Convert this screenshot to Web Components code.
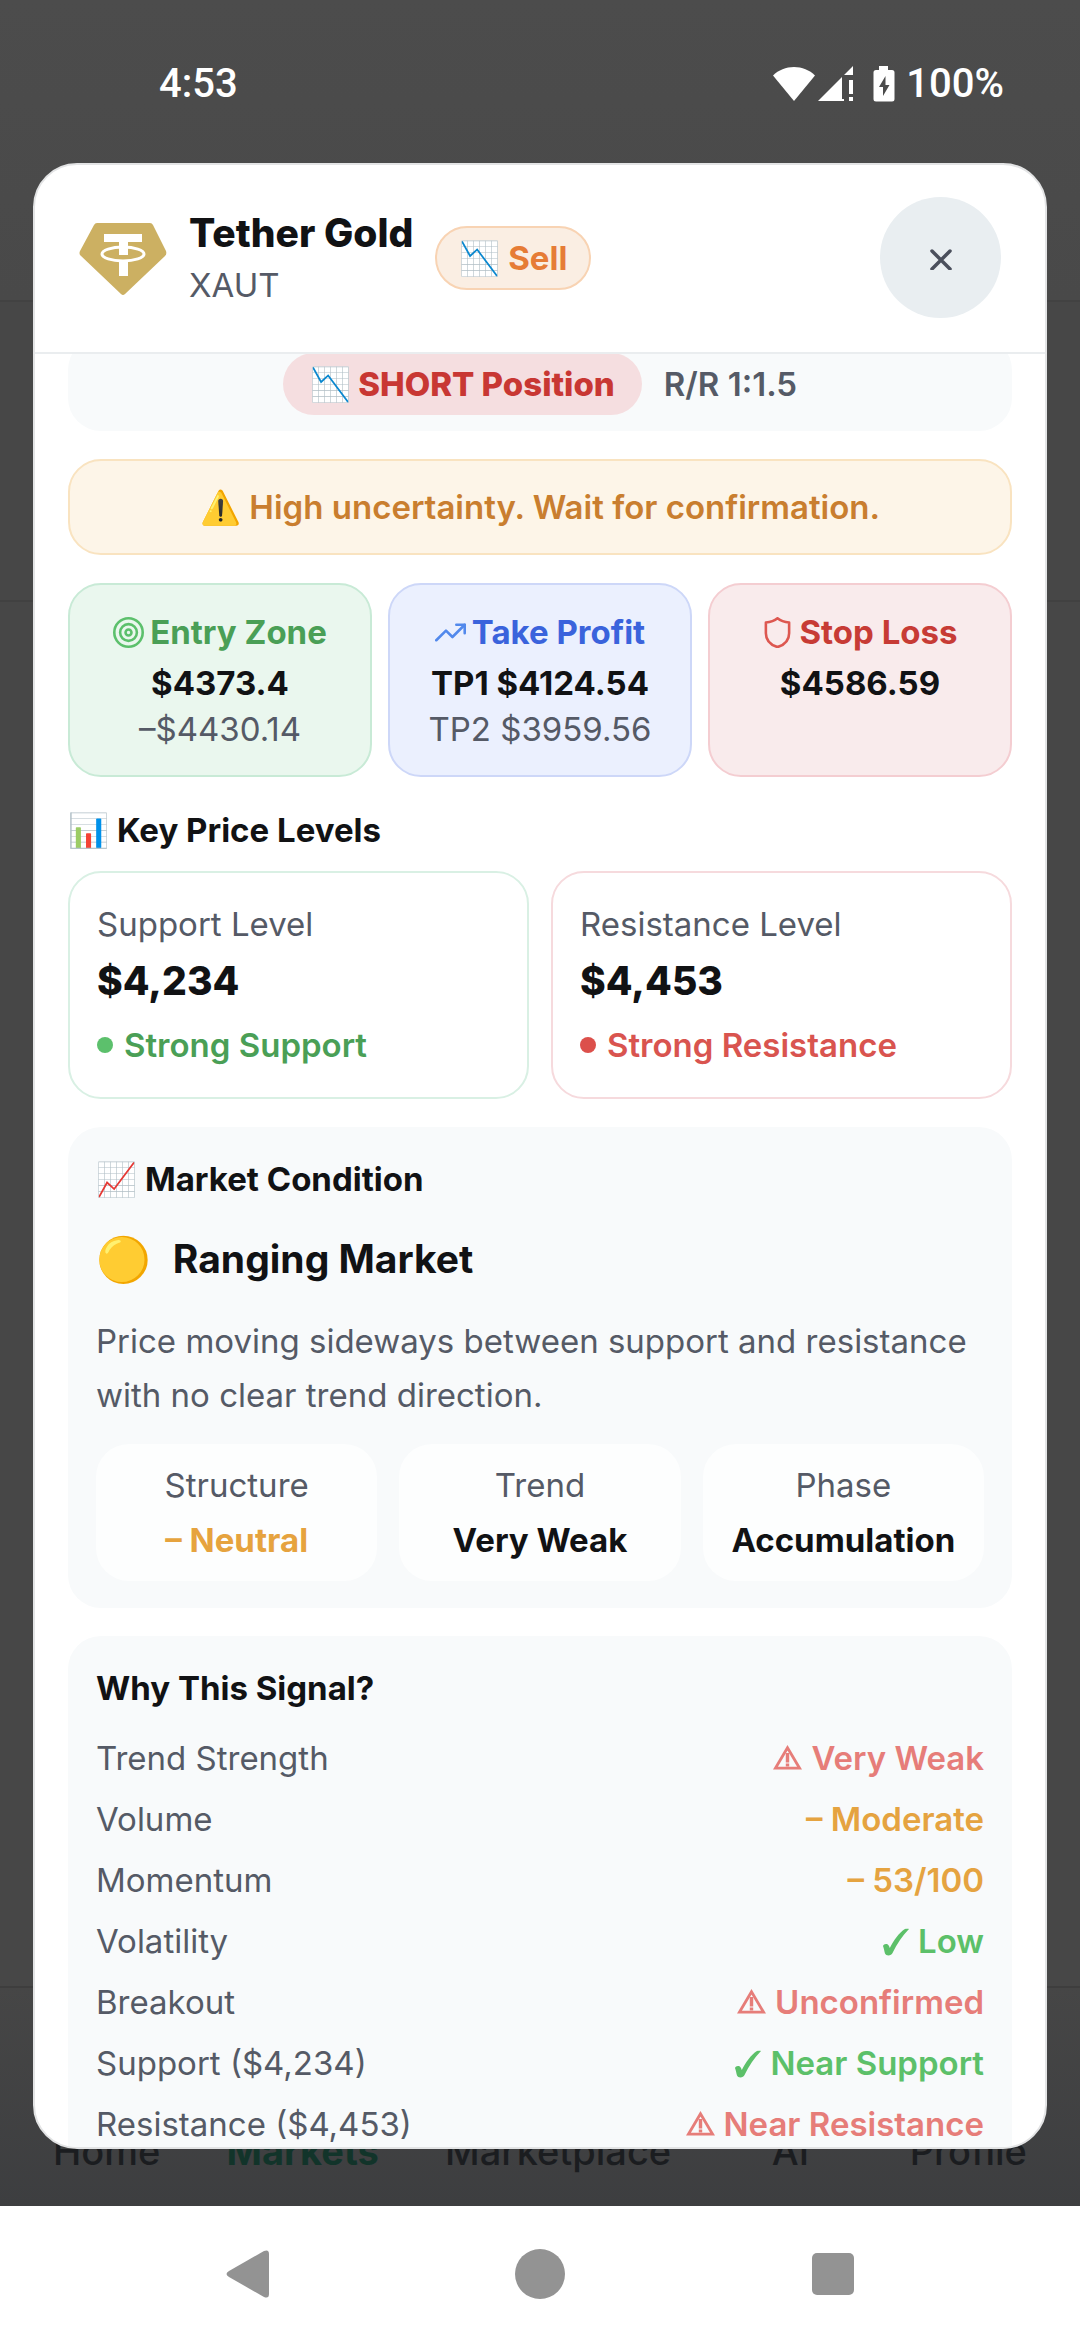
<!DOCTYPE html>
<html lang="en">
<head>
<meta charset="utf-8">
<meta name="viewport" content="width=device-width, initial-scale=1">
<title>Tether Gold signal</title>
<style>
    :root {
        --ink: #111214;
        --muted: #555a66;
        --green: #4a9f56;
        --panel: #f8fafb;
    }

    body {
        margin: 0;
        font-family: Inter, "Noto Sans", "Noto Color Emoji", sans-serif;
        font-size: 33px;
        line-height: 50px;
        color: var(--ink);
        background: #fff;
    }
</style>
</head>
<body>
<app-screen>
    <status-bar slot="status"></status-bar>
    <signal-modal slot="modal">
        <coin-header slot="header" name="Tether Gold" symbol="XAUT" signal="Sell"></coin-header>
        <position-card ratio="R/R 1:1.5">📉 SHORT Position</position-card>
        <alert-note>⚠️ High uncertainty. Wait for confirmation.</alert-note>
        <trade-zones>
            <zone-card tone="green" icon="target">
                Entry Zone
                <span slot="value">$4373.4</span>
                <span slot="extra">–$4430.14</span>
            </zone-card>
            <zone-card tone="blue" icon="trend">
                Take Profit
                <span slot="value">TP1 $4124.54</span>
                <span slot="extra">TP2 $3959.56</span>
            </zone-card>
            <zone-card tone="red" icon="shield">
                Stop Loss
                <span slot="value">$4586.59</span>
            </zone-card>
        </trade-zones>
        <price-levels>
            <level-card tone="green" label="Support Level" price="$4,234">Strong Support</level-card>
            <level-card tone="red" label="Resistance Level" price="$4,453">Strong Resistance</level-card>
        </price-levels>
        <market-condition>
            <stat-tile label="Structure" tone="amber">– Neutral</stat-tile>
            <stat-tile label="Trend">Very Weak</stat-tile>
            <stat-tile label="Phase">Accumulation</stat-tile>
        </market-condition>
        <signal-reasons></signal-reasons>
    </signal-modal>
    <tab-bar slot="tabs"></tab-bar>
    <system-nav slot="system"></system-nav>
</app-screen>

<script>
const icons = {
    target: '<svg viewBox="0 0 24 24" fill="none" stroke="currentColor" stroke-width="2"><circle cx="12" cy="12" r="11"/><circle cx="12" cy="12" r="6.5"/><circle cx="12" cy="12" r="2.3"/></svg>',
    trend: '<svg viewBox="0 0 24 24" fill="none" stroke="currentColor" stroke-width="2" stroke-linecap="round" stroke-linejoin="round"><path d="M1 18l7.5-7.5 5 5L23 6"/><path d="M16.5 6H23v6.5"/></svg>',
    shield: '<svg viewBox="0 0 24 24" fill="none" stroke="currentColor" stroke-width="2" stroke-linejoin="round"><path d="M12 1c2.6 2.2 5.4 3 9 3.200v8.300c0 6-3.600 9-9 10.800-5.400-1.800-9-4.800-9-10.800V4.200C6.600 4 9.400 3.200 12 1z"/></svg>',
    warn: '<svg class="warn" viewBox="0 0 29 25" fill="none" stroke="currentColor" stroke-width="2.8"><path d="M14.500 2.800L2.400 23.200h24.200z"/><path d="M14.500 8v9.500M14.500 18.500v3" stroke-width="3.400"/></svg>',
    check: '<svg class="check" viewBox="0 0 26 27" fill="currentColor"><path d="M0 17.500c.5-2.500 5-3 6 0l.8 2C10.500 12 16 4.500 21.500.8c1-.6 3.500-.9 4.500-.3C19.500 7 14 15 9.500 24.500 8.500 27.500 3 27.800 2 25 1.300 22.500 1 20 0 17.500z"/></svg>'
};

class AppScreen extends HTMLElement {
    constructor() {
        super();
        this.attachShadow({ mode: 'open' }).innerHTML = `
            <style>
                :host {
                    position: relative;
                    display: flex;
                    flex-direction: column;
                    height: 100vh;
                }
                .app {
                    position: relative;
                    flex: 1;
                    display: flex;
                    flex-direction: column;
                    min-height: 0;
                    background: #474747;
                }
                .bar { height: 300px; background: linear-gradient(#4c4c4c, #494949); border-bottom: 2px solid #424242; }
                .filters { height: 298px; border-bottom: 2px solid #414141; }
                .list { flex: 1; }
                .overlay {
                    position: absolute;
                    inset: 0;
                    display: flex;
                    flex-direction: column;
                    padding: 0 33px 57px;
                }
            </style>
            <div class="app">
                <div class="bar"></div>
                <div class="filters"></div>
                <div class="list"></div>
                <slot name="tabs"></slot>
                <div class="overlay">
                    <slot name="status"></slot>
                    <slot name="modal"></slot>
                </div>
            </div>
            <slot name="system"></slot>
        `;
    }
}

class StatusBar extends HTMLElement {
    constructor() {
        super();
        this.attachShadow({ mode: 'open' }).innerHTML = `
            <style>
                :host {
                    display: flex;
                    align-items: center;
                    justify-content: space-between;
                    padding: 59px 43px 54px 126px;
                    color: #fff;
                    font-family: Roboto, Inter, sans-serif;
                    font-size: 40px;
                    font-weight: 500;
                }
                .right { display: flex; align-items: center; }
                svg { display: block; fill: #fff; }
                .wifi { width: 42px; height: 36px; }
                .cell { width: 36px; height: 36px; margin: 0 19px 0 3px; }
                .battery { width: 22px; height: 36px; margin-right: 11px; }
            </style>
            <span>4:53</span>
            <div class="right">
                <svg class="wifi" viewBox="0 0 42 36"><path d="M0 9.500C5.500 4 13 1 21 1s15.500 3 21 8.500L21 35z"/></svg>
                <svg class="cell" viewBox="0 0 36 36"><path d="M35 0v9h-9zM24 11v22l2 0v2H0zM31 14h4v14h-4zM31 31h4v4h-4z"/></svg>
                <svg class="battery" viewBox="0 0 22 36"><path fill-rule="evenodd" d="M6 0h9v4h4q2.500 0 2.500 2.500V33q0 2.500-2.500 2.500H3Q.5 35.500.5 33V6.500Q.5 4 3 4h3zM12.500 10L6 21h4v9l6.500-11h-4z"/></svg>
                <span>100%</span>
            </div>
        `;
    }
}

class SignalModal extends HTMLElement {
    constructor() {
        super();
        this.attachShadow({ mode: 'open' }).innerHTML = `
            <style>
                :host {
                    flex: 1;
                    min-height: 0;
                    display: flex;
                    flex-direction: column;
                    overflow: hidden;
                    background: #fff;
                    border: 2px solid #e3e4e5;
                    border-radius: 44px;
                }
                .scroll {
                    flex: 1;
                    min-height: 0;
                    overflow: hidden;
                    padding: 0 33px;
                }
                /* scrolled a little way down */
                .content {
                    display: flex;
                    flex-direction: column;
                    gap: 28px;
                    margin-top: -17px;
                }
            </style>
            <slot name="header"></slot>
            <div class="scroll"><div class="content"><slot></slot></div></div>
        `;
    }
}

class CoinHeader extends HTMLElement {
    constructor() {
        super();
        this.attachShadow({ mode: 'open' }).innerHTML = `
            <style>
                :host {
                    display: flex;
                    align-items: center;
                    gap: 22px;
                    padding: 32px 44px 34px;
                    border-bottom: 2px solid #eaedef;
                }
                .logo { width: 88px; height: 88px; flex: none; }
                h1 { margin: 0; font-size: 39px; line-height: 54px; font-weight: 800; }
                p { margin: 0; color: var(--muted); }
                .badge {
                    padding: 5px 22px;
                    border: 2px solid #f8d3b3;
                    border-radius: 32px;
                    background: #faeee3;
                    color: #e67c36;
                    font-weight: 700;
                }
                button {
                    display: grid;
                    place-items: center;
                    width: 121px;
                    height: 121px;
                    margin-left: auto;
                    padding: 0;
                    border: 0;
                    border-radius: 50%;
                    background: #e9eef1;
                    color: #4a4f5c;
                }
                button svg { width: 24px; height: 24px; display: block; }
            </style>
            <svg class="logo" viewBox="0 0 88 88">
                <path fill="#ccb062" d="M18 9h53q2 0 3 2l13 26q1 3-1 5L46 80q-2 2-4 0L1 41q-1-2 0-4l14-26q1-2 3-2z"/>
                <path fill="#fff" d="M25 20h38v8H49v13h-9V28H25z"/>
                <path fill="#fff" d="M40 46h9v16h-9z"/>
                <ellipse cx="44" cy="40" rx="21" ry="7" fill="none" stroke="#fff" stroke-width="3"/>
            </svg>
            <div>
                <h1>${this.getAttribute('name')}</h1>
                <p>${this.getAttribute('symbol')}</p>
            </div>
            <span class="badge">📉 ${this.getAttribute('signal')}</span>
            <button type="button" aria-label="Close">
                <svg viewBox="0 0 24 24" fill="none" stroke="currentColor" stroke-width="3.500" stroke-linecap="round"><path d="M3 5l18 18M21 5L3 23"/></svg>
            </button>
        `;
    }
}

class PositionCard extends HTMLElement {
    constructor() {
        super();
        this.attachShadow({ mode: 'open' }).innerHTML = `
            <style>
                :host {
                    display: flex;
                    justify-content: center;
                    align-items: center;
                    gap: 22px;
                    padding: 16px;
                    border-radius: 33px;
                    background: var(--panel);
                }
                .pill {
                    padding: 6px 27px;
                    border-radius: 31px;
                    background: #f5dee0;
                    color: #c83733;
                    font-weight: 800;
                }
                .ratio { color: var(--muted); font-weight: 600; }
            </style>
            <span class="pill"><slot></slot></span>
            <span class="ratio">${this.getAttribute('ratio')}</span>
        `;
    }
}

class AlertNote extends HTMLElement {
    constructor() {
        super();
        this.attachShadow({ mode: 'open' }).innerHTML = `
            <style>
                :host {
                    display: block;
                    padding: 21px;
                    border: 2px solid #f9e3c0;
                    border-radius: 33px;
                    background: #fdf5e8;
                    color: #c97e2f;
                    font-weight: 600;
                    text-align: center;
                }
            </style>
            <slot></slot>
        `;
    }
}

class TradeZones extends HTMLElement {
    constructor() {
        super();
        this.attachShadow({ mode: 'open' }).innerHTML = `
            <style>
                :host { display: grid; grid-template-columns: repeat(3, 1fr); gap: 16px; }
            </style>
            <slot></slot>
        `;
    }
}

class ZoneCard extends HTMLElement {
    constructor() {
        super();
        this.attachShadow({ mode: 'open' }).innerHTML = `
            <style>
                :host {
                    display: flex;
                    flex-direction: column;
                    align-items: center;
                    padding: 22px 8px 21px;
                    border: 2px solid;
                    border-radius: 33px;
                }
                :host([tone="green"]) { background: #eaf7ee; border-color: #c8ead6; --title: #4a9f56; --icon: #5cc06c; }
                :host([tone="blue"]) { background: #ebf0fe; border-color: #cdd7f8; --title: #3a63dc; --icon: #5289ec; }
                :host([tone="red"]) { background: #f9ebec; border-color: #f4cdd1; --title: #c73b35; --icon: #dd5750; }
                .title { display: flex; align-items: center; gap: 6px; font-weight: 700; color: var(--title); }
                .title svg { width: 31px; height: 31px; color: var(--icon); }
                .value { margin-top: 6px; line-height: 41px; font-weight: 700; }
                .extra { color: var(--muted); }
            </style>
            <div class="title">${icons[this.getAttribute('icon')]}<span><slot></slot></span></div>
            <div class="value"><slot name="value"></slot></div>
            <div class="extra"><slot name="extra"></slot></div>
        `;
    }
}

class PriceLevels extends HTMLElement {
    constructor() {
        super();
        this.attachShadow({ mode: 'open' }).innerHTML = `
            <style>
                :host { display: block; }
                h2 { margin: 0 0 16px; font-size: 33px; line-height: 50px; font-weight: 700; }
                .grid { display: grid; grid-template-columns: 1fr 1fr; gap: 22px; }
            </style>
            <h2>📊 Key Price Levels</h2>
            <div class="grid"><slot></slot></div>
        `;
    }
}

class LevelCard extends HTMLElement {
    constructor() {
        super();
        this.attachShadow({ mode: 'open' }).innerHTML = `
            <style>
                :host {
                    display: block;
                    padding: 26px 27px 27px;
                    border: 2px solid;
                    border-radius: 33px;
                }
                :host([tone="green"]) { border-color: #d9f0e4; --text: #4a9f56; --dot: #5cc06c; }
                :host([tone="red"]) { border-color: #f6dadd; --text: #d9544f; --dot: #dc504b; }
                .label { color: var(--muted); }
                .price { margin: 5px 0 12px; font-size: 39px; line-height: 54px; font-weight: 800; }
                .state { display: flex; align-items: center; gap: 11px; color: var(--text); font-weight: 600; }
                .state::before { content: ""; width: 16px; height: 16px; border-radius: 50%; background: var(--dot); }
            </style>
            <div class="label">${this.getAttribute('label')}</div>
            <div class="price">${this.getAttribute('price')}</div>
            <div class="state"><span><slot></slot></span></div>
        `;
    }
}

class MarketCondition extends HTMLElement {
    constructor() {
        super();
        this.attachShadow({ mode: 'open' }).innerHTML = `
            <style>
                :host {
                    display: flex;
                    flex-direction: column;
                    gap: 22px;
                    padding: 27px 28px;
                    border-radius: 33px;
                    background: var(--panel);
                }
                h2 { margin: 0; font-size: 33px; line-height: 50px; font-weight: 700; }
                h3 { display: flex; align-items: center; gap: 22px; margin: 0; font-size: 39px; line-height: 66px; font-weight: 700; }
                .dot { font-size: 44px; }
                p { margin: 0; line-height: 54px; color: var(--muted); }
                .grid { display: grid; grid-template-columns: repeat(3, 1fr); gap: 22px; }
            </style>
            <h2>📈 Market Condition</h2>
            <h3><span class="dot">🟡</span>Ranging Market</h3>
            <p>Price moving sideways between support and resistance with no clear trend direction.</p>
            <div class="grid"><slot></slot></div>
        `;
    }
}

class StatTile extends HTMLElement {
    constructor() {
        super();
        this.attachShadow({ mode: 'open' }).innerHTML = `
            <style>
                :host {
                    display: block;
                    padding: 16px 0;
                    border-radius: 33px;
                    background: #fdfefe;
                    text-align: center;
                }
                .label { margin-bottom: 5px; color: var(--muted); }
                .value { font-weight: 700; }
                :host([tone="amber"]) .value { color: #e6a33e; }
            </style>
            <div class="label">${this.getAttribute('label')}</div>
            <div class="value"><slot></slot></div>
        `;
    }
}

class SignalReasons extends HTMLElement {
    constructor() {
        super();
        const rows = [
            ['Trend Strength', 'warn', 'Very Weak'],
            ['Volume', 'flat', 'Moderate'],
            ['Momentum', 'flat', '53/100'],
            ['Volatility', 'check', 'Low'],
            ['Breakout', 'warn', 'Unconfirmed'],
            ['Support ($4,234)', 'check', 'Near Support'],
            ['Resistance ($4,453)', 'warn', 'Near Resistance']
        ];
        this.attachShadow({ mode: 'open' }).innerHTML = `
            <style>
                :host {
                    display: block;
                    padding: 27px 28px;
                    border-radius: 33px;
                    background: var(--panel);
                }
                h2 { margin: 0 0 15px; font-size: 33px; line-height: 50px; font-weight: 700; }
                table { width: 100%; border-collapse: collapse; line-height: 61px; }
                th, td { padding: 0; }
                th { text-align: left; font-weight: 400; color: var(--muted); }
                td { text-align: right; font-weight: 600; }
                td.warn { color: #e67d79; }
                td.flat { color: #e5a340; }
                td.check { color: #5cc069; }
                svg.warn { width: 29px; height: 25px; margin-right: 9px; }
                svg.check { width: 26px; height: 28px; margin-right: 9px; vertical-align: -3px; }
            </style>
            <h2>Why This Signal?</h2>
            <table>
                ${rows.map(([label, kind, text]) => `
                    <tr><th scope="row">${label}</th><td class="${kind}">${icons[kind] || '– '}${text}</td></tr>
                `).join('')}
            </table>
        `;
    }
}

class TabBar extends HTMLElement {
    constructor() {
        super();
        this.attachShadow({ mode: 'open' }).innerHTML = `
            <style>
                :host {
                    display: block;
                    padding: 144px 53px 36px;
                    border-top: 2px solid #3e3e3e;
                    background: linear-gradient(#464646, #3d3e40);
                }
                nav { display: flex; justify-content: space-between; line-height: 38px; }
                a { min-width: 106px; color: #1b1d20; font-size: 38px; font-weight: 500; text-align: center; text-decoration: none; }
                a.on { color: #12342a; font-weight: 700; }
            </style>
            <nav>
                <a href="#home">Home</a>
                <a href="#markets" class="on">Markets</a>
                <a href="#marketplace">Marketplace</a>
                <a href="#ai">AI</a>
                <a href="#profile">Profile</a>
            </nav>
        `;
    }
}

class SystemNav extends HTMLElement {
    constructor() {
        super();
        this.attachShadow({ mode: 'open' }).innerHTML = `
            <style>
                :host {
                    display: flex;
                    justify-content: space-around;
                    padding: 41px 101px 41px;
                    background: #fff;
                }
                button { display: block; padding: 0; border: 0; background: none; }
                svg { display: block; width: 52px; height: 52px; fill: #939393; }
            </style>
            <button type="button" aria-label="Back"><svg viewBox="0 0 52 52"><path d="M43 4q5-2 5 3v40q0 5-5 3L8 30q-5-3 0-6z"/></svg></button>
            <button type="button" aria-label="Home"><svg viewBox="0 0 52 52"><circle cx="26" cy="27" r="25"/></svg></button>
            <button type="button" aria-label="Recents"><svg viewBox="0 0 52 52"><rect x="5" y="6" width="42" height="42" rx="5"/></svg></button>
        `;
    }
}

customElements.define('app-screen', AppScreen);
customElements.define('status-bar', StatusBar);
customElements.define('signal-modal', SignalModal);
customElements.define('coin-header', CoinHeader);
customElements.define('position-card', PositionCard);
customElements.define('alert-note', AlertNote);
customElements.define('trade-zones', TradeZones);
customElements.define('zone-card', ZoneCard);
customElements.define('price-levels', PriceLevels);
customElements.define('level-card', LevelCard);
customElements.define('market-condition', MarketCondition);
customElements.define('stat-tile', StatTile);
customElements.define('signal-reasons', SignalReasons);
customElements.define('tab-bar', TabBar);
customElements.define('system-nav', SystemNav);
</script>
</body>
</html>
